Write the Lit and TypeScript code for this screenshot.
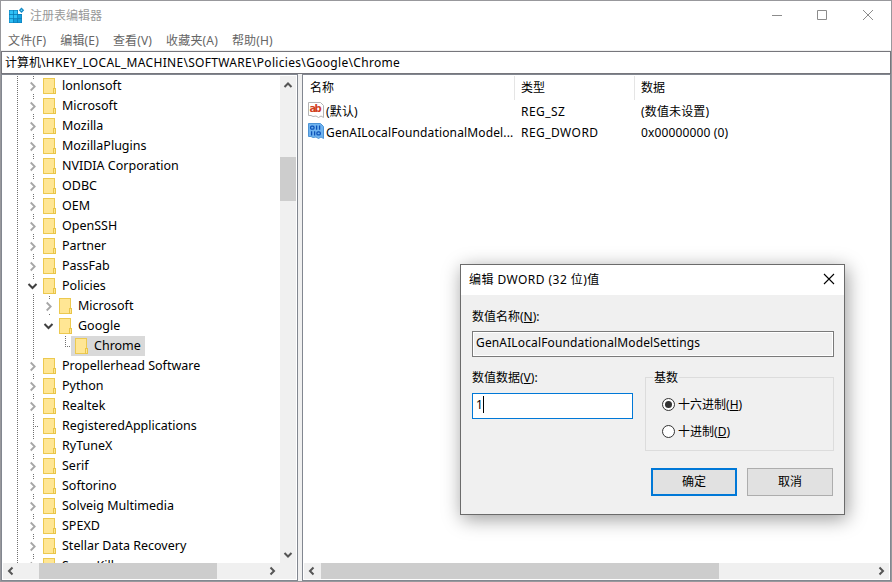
import { LitElement, html, css, svg, nothing } from "lit";
import { customElement, property } from "lit/decorators.js";
import { classMap } from "lit/directives/class-map.js";

interface TreeNode {
  name: string;
  depth: number;
  state: "closed" | "open" | "leaf";
  selected?: boolean;
}

const node = (name: string, state: TreeNode["state"] = "closed", depth = 0, selected = false): TreeNode => ({
  name,
  depth,
  state,
  selected,
});

const TREE: TreeNode[] = [
  node("lonlonsoft"),
  node("Microsoft"),
  node("Mozilla"),
  node("MozillaPlugins"),
  node("NVIDIA Corporation"),
  node("ODBC"),
  node("OEM"),
  node("OpenSSH"),
  node("Partner"),
  node("PassFab"),
  node("Policies", "open"),
  node("Microsoft", "closed", 1),
  node("Google", "open", 1),
  node("Chrome", "leaf", 2, true),
  node("Propellerhead Software"),
  node("Python"),
  node("Realtek"),
  node("RegisteredApplications", "leaf"),
  node("RyTuneX"),
  node("Serif"),
  node("Softorino"),
  node("Solveig Multimedia"),
  node("SPEXD"),
  node("Stellar Data Recovery"),
  node("SuperKill"),
];

const MENU: [string, string][] = [
  ["文件", "F"],
  ["编辑", "E"],
  ["查看", "V"],
  ["收藏夹", "A"],
  ["帮助", "H"],
];

const ARROWS: Record<string, string> = {
  left: "M8.5 3.5 L5 7 L8.5 10.5",
  right: "M5.5 3.5 L9 7 L5.5 10.5",
  up: "M3.5 9 L7 5.5 L10.5 9",
  down: "M3.5 5 L7 8.5 L10.5 5",
};

const arrow = (dir: string) => html`<svg class="arrow" width="14" height="14" viewBox="0 0 14 14">
  <path d=${ARROWS[dir]} fill="none" stroke="#555" stroke-width="2" />
</svg>`;

@customElement("scroll-bar")
class ScrollBar extends LitElement {
  @property({ type: Boolean, reflect: true }) vertical = false;
  @property({ type: Number }) offset = 0;
  @property({ type: Number }) size = 0;

  static styles = css`
    :host { display: flex; align-items: center; background: #f0f0f0; }
    :host([vertical]) { flex-direction: column; }
    .end { flex: none; width: 16px; height: 16px; display: grid; place-items: center; }
    :host([vertical]) .end { height: 17px; }
    .track { flex: 1; display: flex; align-self: stretch; }
    :host([vertical]) .track { flex-direction: column; }
    .thumb { background: #cdcdcd; }
  `;

  render() {
    const v = this.vertical;
    const style = v
      ? `margin-top:${this.offset}px;height:${this.size}px`
      : `margin-left:${this.offset}px;width:${this.size}px`;
    return html`<div class="end">${arrow(v ? "up" : "left")}</div>
      <div class="track"><div class="thumb" style=${style}></div></div>
      <div class="end">${arrow(v ? "down" : "right")}</div>`;
  }
}

@customElement("key-tree")
class KeyTree extends LitElement {
  static styles = css`
    :host { display: block; overflow: hidden; background: #fff; }
    .row { display: flex; height: 20px; }
    .guide { flex: none; width: 16px; height: 20px; }
    .label { display: flex; align-items: center; padding: 0 4px; margin-left: -2px; height: 20px; white-space: pre;
      font-size: 12.5px; line-height: 18px; }
    .label span { padding-bottom: 1px; margin-left: 5px; }
    .selected { background: #d9d9d9; }
    .folder { flex: none; }
    .row svg { display: block; }
    .root { width: 22px; }
  `;

  guide(line: "full" | "none" | "corner" | "tee", toggle: TreeNode["state"] = "leaf") {
    const dots = (d: string) => svg`<path d=${d} stroke="#707070" stroke-dasharray="1 1" fill="none" />`;
    return html`<svg class="guide" width="16" height="20" viewBox="0 0 16 20">
      ${line === "full" || line === "tee"
        ? toggle === "leaf"
          ? dots("M8.5 0 V20")
          : svg`${dots("M8.5 0 V4")}${dots("M8.5 18 V20")}`
        : nothing}
      ${line === "corner" ? dots("M8.5 0 V10") : nothing}
      ${line === "corner" || line === "tee" ? dots("M8 10.5 H14") : nothing}
      ${toggle === "closed"
        ? svg`<path d="M5.7 6.5 L9.7 10.5 L5.7 14.5" fill="none" stroke="#a6a6a6" stroke-width="1.8" />`
        : nothing}
      ${toggle === "open"
        ? svg`<path d="M3.5 8 L7.5 12 L11.5 8" fill="none" stroke="#404040" stroke-width="2" />`
        : nothing}
    </svg>`;
  }

  guides(n: TreeNode) {
    if (n.depth === 0) return this.guide(n.state === "leaf" ? "tee" : "full", n.state);
    if (n.depth === 1) return html`${this.guide("full")}${this.guide(n.name === "Google" ? "none" : "full", n.state)}`;
    return html`${this.guide("full")}${this.guide("none")}${this.guide("corner")}`;
  }

  render() {
    return TREE.map(
      (n) => html`<div class="row">
        <svg class="root" width="22" height="20" viewBox="0 0 22 20">
          <path d="M14.5 0 V20" stroke="#707070" stroke-dasharray="1 1" />
        </svg>
        ${this.guides(n)}
        <div class=${classMap({ label: true, selected: !!n.selected })}>
          <svg class="folder" width="14" height="16" viewBox="0 0 14 16">
            <rect x=".5" y=".5" width="11" height="15" fill="#ffe694" stroke="#ecc94f" />
            <rect x="10.5" y="10.5" width="2" height="5" fill="#ffe694" stroke="#e9c548" />
          </svg>
          <span>${n.name}</span>
        </div>
      </div>`
    );
  }
}

@customElement("value-list")
class ValueList extends LitElement {
  static styles = css`
    :host { display: block; font-size: 12px; white-space: pre; }
    .grid { display: grid; grid-template-columns: 211px 120px 1fr; }
    .head { height: 24px; line-height: 24px; padding-left: 6px; box-sizing: border-box; border-right: 1px solid #e5e5e5; }
    .head:nth-child(3) { border: 0; }
    .cell { height: 21px; line-height: 19px; padding-left: 6px; display: flex; overflow: hidden; }
    .name { padding-left: 4px; gap: 2px; letter-spacing: 0.14px; }
    .type { letter-spacing: 0.45px; }
    .data { letter-spacing: 0.14px; }
    .gap { grid-column: 1 / -1; height: 2px; }
    .ic { flex: none; width: 16px; height: 16px; }
    .ab { font: bold 10px "DejaVu Sans", sans-serif; letter-spacing: 0; }
  `;

  icon(binary: boolean) {
    return html`<svg class="ic" viewBox="0 0 16 16">
      <path d="M.5 .5 H12.5 L15.5 3.5 V15.5 L13 14 L10.5 15.5 L8 14 L5 14.5 L3 13.5 L.5 13.5 Z"
        fill=${binary ? "#6fb3ef" : "#fff"} stroke=${binary ? "#4d94d6" : "#b5b5b5"} />
      ${binary
        ? svg`<g fill="none" stroke="#0d52b8" stroke-width="1.3">
            <rect x="2.6" y="3.1" width="3.4" height="3" rx="1.2" /><path d="M8.6 2.5 V6.8 M11.6 2.5 V6.8" />
            <path d="M3.6 8.3 V12.4 M6.6 8.3 V12.4" /><rect x="8.9" y="8.9" width="3.4" height="3" rx="1.2" />
          </g>`
        : svg`<text class="ab" x="1.6" y="10.2" textLength="12" fill="#d1401f">ab</text>`}
    </svg>`;
  }

  render() {
    return html`<div class="grid">
      <div class="head">名称</div><div class="head">类型</div><div class="head">数据</div>
      <div class="gap"></div>
      <div class="cell name">${this.icon(false)}<span>(默认)</span></div>
      <div class="cell type">REG_SZ</div>
      <div class="cell data">(数值未设置)</div>
      <div class="cell name">${this.icon(true)}<span>GenAILocalFoundationalModel...</span></div>
      <div class="cell type">REG_DWORD</div>
      <div class="cell data">0x00000000 (0)</div>
    </div>`;
  }
}

@customElement("dword-dialog")
class DwordDialog extends LitElement {
  static styles = css`
    :host { display: flex; flex-direction: column; box-sizing: border-box; border: 1px solid #6b6b6b; background: #f0f0f0;
      box-shadow: 2px 4px 18px rgba(0, 0, 0, 0.4); font-size: 12px; line-height: 18px; color: #000; }
    .title { display: flex; justify-content: space-between; height: 30px; background: #fff; padding: 0 9px 0 8px; }
    .title span { padding-top: 6px; letter-spacing: 0.45px; }
    .title svg { margin-top: 8px; }
    .body { flex: 1; padding: 13px 10px 0 11px; display: flex; flex-direction: column; }
    .field { box-sizing: border-box; height: 26px; border: 1px solid #7a7a7a; padding: 2px 0 0 3px; }
    .name { margin-top: 5px; box-shadow: inset 0 0 0 1px #fff; letter-spacing: 0.14px; }
    .cols { display: flex; gap: 12px; margin-top: 12px; }
    .left { width: 161px; }
    .value { margin-top: 6px; border-color: #0078d7; background: #fff; display: flex; }
    .caret { width: 1px; height: 17px; background: #000; }
    .group { margin: 8px 0 0; flex: 1; height: 74px; box-sizing: border-box; border: 1px solid #dcdcdc; padding: 0 0 0 16px; }
    .legend { display: block; width: 24px; margin: -9px 0 0 -9px; padding: 0 1px; background: #f0f0f0; }
    .radio { display: flex; align-items: center; gap: 3px; height: 27px; }
    .first { margin-top: 4px; }
    .buttons { display: flex; gap: 10px; justify-content: flex-end; margin: 17px 1px 0 0; }
    .button { box-sizing: border-box; width: 86px; height: 28px; line-height: 25px; text-align: center; background: #e1e1e1; border: 1px solid #adadad; }
    .default { border: 2px solid #0078d7; line-height: 23px; }
  `;

  radio(label: string, key: string, on: boolean) {
    return html`<div class=${classMap({ radio: true, first: on })}>
      <svg width="13" height="13" viewBox="0 0 13 13">
        <circle cx="6.5" cy="6.5" r="6" fill="#fff" stroke="#333" />
        ${on ? svg`<circle cx="6.5" cy="6.5" r="3.5" fill="#333" />` : nothing}
      </svg>
      <span>${label}(<u>${key}</u>)</span>
    </div>`;
  }

  render() {
    return html`<div class="title">
        <span>编辑 DWORD (32 位)值</span>
        <svg width="12" height="12" viewBox="0 0 12 12"><path d="M1 1 L11 11 M11 1 L1 11" stroke="#000" stroke-width="1.1" /></svg>
      </div>
      <div class="body">
        <div>数值名称(<u>N</u>):</div>
        <div class="field name">GenAILocalFoundationalModelSettings</div>
        <div class="cols">
          <div class="left">
            <div>数值数据(<u>V</u>):</div>
            <div class="field value">1<div class="caret"></div></div>
          </div>
          <div class="group">
            <span class="legend">基数</span>
            ${this.radio("十六进制", "H", true)}${this.radio("十进制", "D", false)}
          </div>
        </div>
        <div class="buttons"><div class="button default">确定</div><div class="button">取消</div></div>
      </div>`;
  }
}

@customElement("app-root")
class AppRoot extends LitElement {
  static styles = css`
    :host { display: flex; flex-direction: column; position: relative; box-sizing: border-box; width: 892px; height: 582px;
      overflow: hidden; background: #fff; border: 1px solid #98989c;
      font: 12px/18px "Noto Sans", "Noto Sans CJK SC", sans-serif; color: #000; }
    .title { display: flex; height: 30px; padding: 0 16px 0 7px; color: #999; }
    .app-icon { flex: none; margin: 6px 4px 0 0; }
    .caption { flex: 1; padding-top: 6px; }
    .controls { padding-top: 8px; }
    .menu { display: flex; box-sizing: border-box; gap: 14px; height: 19px; padding: 1px 0 0 7px; color: #666; letter-spacing: 0.15px; }
    .strip { height: 1px; background: #f0f0f0; }
    .address { box-sizing: border-box; height: 23px; border: 1px solid #76767c; padding: 1px 3px; line-height: 19px; }
    .address span { letter-spacing: 0.31px; }
    .panes { flex: 1; display: flex; gap: 4px; min-height: 0; background: #f0f0f0; }
    .pane { box-sizing: border-box; border: 1px solid #828790; padding: 1px; min-width: 0; background: #fff; }
    .keys { width: 297px; display: grid; grid-template: 1fr 16px / 1fr 16px; }
    .values { flex: 1; display: flex; flex-direction: column; }
    .values value-list { flex: 1; }
    .values scroll-bar { height: 16px; }
    .corner { background: #f0f0f0; }
    dword-dialog { position: absolute; left: 459px; top: 263px; width: 385px; height: 251px; }
  `;

  render() {
    return html`<div class="title">
        <svg class="app-icon" width="18" height="17" viewBox="0 0 18 17">
          <path d="M1 3 H10 V7 H14 V16 H1 Z" fill="#0b78b4" />
          <g fill="#2fc0f6">
            <rect x="1.5" y="3.5" width="3.5" height="3.5" /><rect x="5.7" y="3.5" width="3.6" height="3.5" />
            <rect x="1.5" y="7.8" width="3.5" height="3.5" /><rect x="5.7" y="7.8" width="3.6" height="3.5" />
            <rect x="1.5" y="12.1" width="3.5" height="3.4" />
          </g>
          <g fill="#14a0de">
            <rect x="10" y="7.8" width="3.5" height="3.5" />
            <rect x="5.7" y="12.1" width="3.6" height="3.4" /><rect x="10" y="12.1" width="3.5" height="3.4" />
          </g>
          <path d="M13.5 .5 L16.2 3.2 L13.5 5.9 L10.8 3.2 Z" fill="#168bc5" />
          <circle cx="13.5" cy="3.2" r=".8" fill="#7fdcff" />
        </svg>
        <span class="caption">注册表编辑器</span>
        <svg class="controls" width="103" height="12" viewBox="0 0 103 12">
          <path d="M0 6.5 H10 M45.5 1.5 H54.5 V10.5 H45.5 Z M91 1 L101 11 M101 1 L91 11" fill="none" stroke="#8c8c8c" />
        </svg>
      </div>
      <div class="menu">${MENU.map(([t, k]) => html`<span>${t}(${k})</span>`)}</div>
      <div class="strip"></div>
      <div class="address">计算机<span>\\HKEY_LOCAL_MACHINE\\SOFTWARE\\Policies\\Google\\Chrome</span></div>
      <div class="panes">
        <div class="pane keys">
          <key-tree></key-tree>
          <scroll-bar vertical .offset=${64} .size=${44}></scroll-bar>
          <scroll-bar .offset=${20} .size=${178}></scroll-bar>
          <div class="corner"></div>
        </div>
        <div class="pane values">
          <value-list></value-list>
          <scroll-bar .offset=${1} .size=${398}></scroll-bar>
        </div>
      </div>
      <dword-dialog></dword-dialog>`;
  }
}
